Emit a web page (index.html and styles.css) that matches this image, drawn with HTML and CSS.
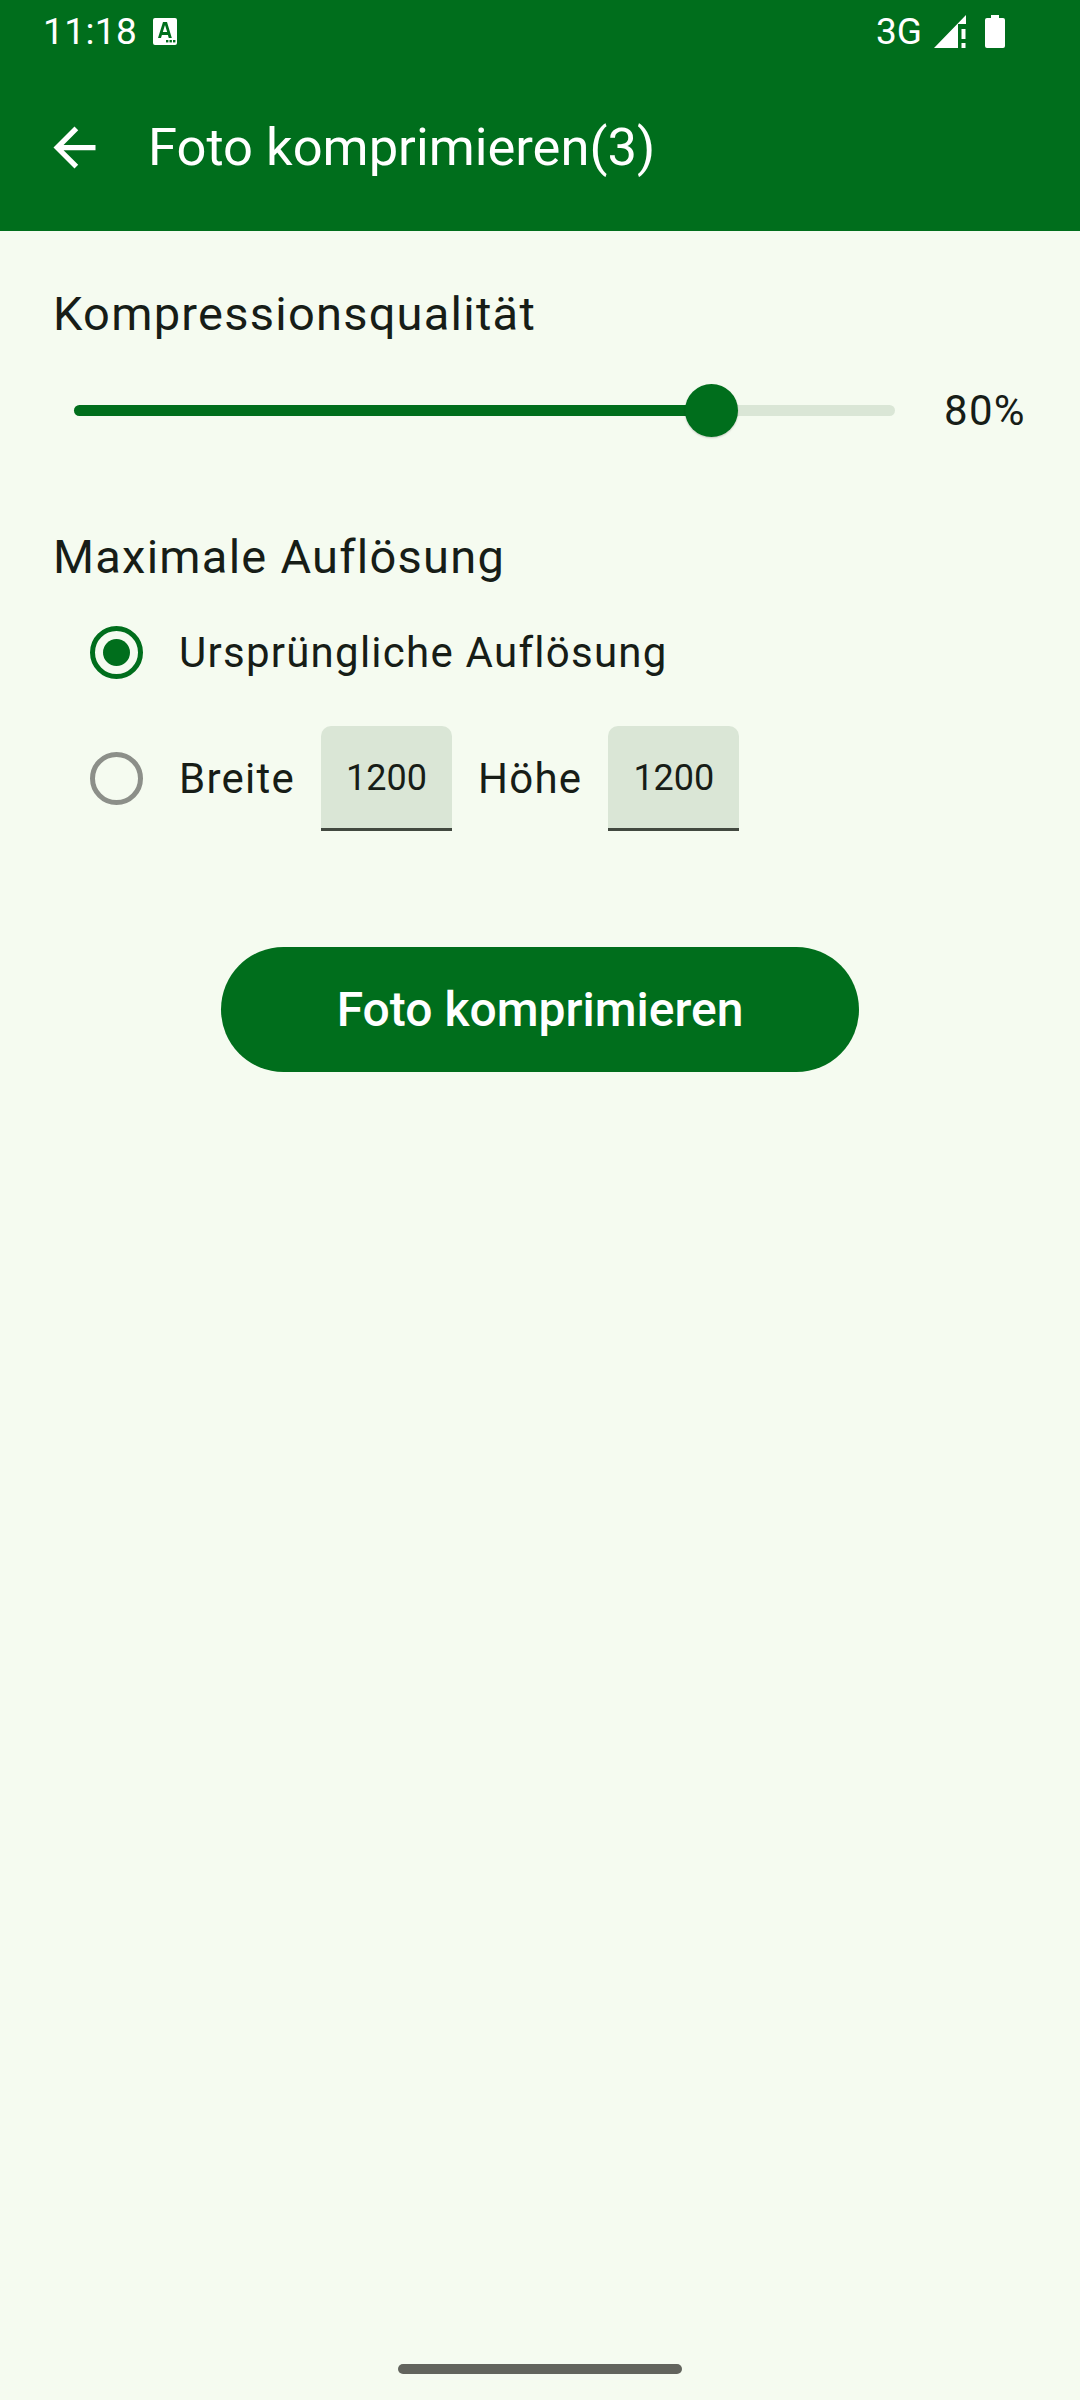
FILE: index.html
```html
<!DOCTYPE html>
<html>
  <head>
    <meta charset="utf-8">
    <link rel="stylesheet" href="styles.css">
    <title>Foto komprimieren</title>
  </head>
  <body>
    <div class="screen">
      <header class="app-header">
        <div class="status-bar">
          <div class="status-left">
            <span class="status-time">11:18</span>
            <svg class="icon-a" width="24" height="27" viewBox="0 0 24 27">
              <path fill="#fff" fill-rule="evenodd" d="M2 0h20a2 2 0 0 1 2 2v23a2 2 0 0 1-2 2H2a2 2 0 0 1-2-2V2a2 2 0 0 1 2-2zM10 4 5 20h3l.9-3h6l.9 3h3L14 4zM9.800 14 12 7l2.200 7z"/>
              <rect x="13" y="22" width="2.400" height="2.400" fill="#006e1c"/>
              <rect x="16.500" y="22" width="2.400" height="2.400" fill="#006e1c"/>
              <rect x="20" y="22" width="2.400" height="2.400" fill="#006e1c"/>
            </svg>
          </div>
          <div class="status-right">
            <span class="status-net">3G</span>
            <svg class="icon-signal" width="32" height="33" viewBox="0 0 32 33">
              <path fill="#fff" d="M0 33 32 0v9h-8v24z"/>
              <rect x="27.500" y="14" width="4" height="10" fill="#fff"/>
              <rect x="27.500" y="28" width="4" height="5" fill="#fff"/>
            </svg>
            <svg class="icon-battery" width="20" height="33" viewBox="0 0 20 33">
              <path fill="#fff" d="M6 0h8v3h4a2 2 0 0 1 2 2v26a2 2 0 0 1-2 2H2a2 2 0 0 1-2-2V5a2 2 0 0 1 2-2h4z"/>
            </svg>
          </div>
        </div>
        <div class="toolbar">
          <svg class="icon-back" width="63" height="63" viewBox="0 0 24 24">
            <path fill="#fff" d="M20 11H7.830l5.590-5.590L12 4l-8 8 8 8 1.410-1.410L7.830 13H20v-2z"/>
          </svg>
          <h1 class="toolbar-title">Foto komprimieren(3)</h1>
        </div>
      </header>

      <main class="content">
        <h2 class="section-label">Kompressionsqualität</h2>
        <div class="slider-row">
          <div class="slider">
            <div class="slider-fill"></div>
            <div class="slider-thumb"></div>
          </div>
          <span class="slider-value">80%</span>
        </div>

        <h2 class="section-label section-label-second">Maximale Auflösung</h2>
        <div class="radio-row radio-row-first">
          <span class="radio radio-on"></span>
          <span class="radio-text">Ursprüngliche Auflösung</span>
        </div>
        <div class="radio-row radio-row-second">
          <span class="radio"></span>
          <span class="radio-text">Breite</span>
          <div class="size-input">1200</div>
          <span class="radio-text">Höhe</span>
          <div class="size-input">1200</div>
        </div>

        <div class="button-row">
          <button class="main-btn">Foto komprimieren</button>
        </div>
      </main>

      <div class="home-bar"></div>
    </div>
  </body>
</html>
```

FILE: styles.css
```css
* {
  box-sizing: border-box;
}
html,
body {
  margin: 0;
  padding: 0;
}
body {
  width: 1080px;
  height: 2400px;
  overflow: hidden;
  background-color: #f5fbf0;
  font-family: Roboto, "Liberation Sans", sans-serif;
  color: #171d17;
}
.screen {
  height: 2400px;
  display: flex;
  flex-direction: column;
}

/* header */
.app-header {
  height: 231px;
  background-color: #006e1c;
  color: #fff;
}
.status-bar {
  height: 62px;
  padding: 0 75px 0 43px;
  display: flex;
  justify-content: space-between;
  align-items: center;
}
.status-left,
.status-right {
  display: flex;
  align-items: center;
}
.status-time {
  font-size: 37px;
  letter-spacing: 0.4px;
}
.icon-a {
  margin-left: 16px;
}
.status-net {
  font-size: 37px;
  margin-right: 12px;
}
.icon-battery {
  margin-left: 19px;
}
.toolbar {
  height: 170px;
  padding-left: 43px;
  display: flex;
  align-items: center;
}
.toolbar-title {
  margin: 0 0 0 42px;
  font-size: 52.5px;
  font-weight: 400;
}

/* form */
.content {
  flex: 1;
  padding: 0 53px;
}
.section-label {
  margin: 0;
  font-size: 47px;
  line-height: 62px;
  font-weight: 400;
  letter-spacing: 1.25px;
}
.content > .section-label:first-child {
  margin-top: 52px;
}
.section-label-second {
  margin-top: 90px;
}
.slider-row {
  margin-top: 39px;
  height: 52px;
  display: flex;
  align-items: center;
}
.slider {
  position: relative;
  width: 821px;
  height: 11px;
  margin-left: 21px;
  border-radius: 6px;
  background-color: #dae6d6;
}
.slider-fill {
  width: 80%;
  height: 100%;
  border-radius: 6px;
  background-color: #006e1c;
}
.slider-thumb {
  position: absolute;
  left: 611px;
  top: -21px;
  width: 53px;
  height: 53px;
  border-radius: 50%;
  background-color: #006e1c;
  box-shadow: 0 1px 2px rgba(0, 0, 0, 0.2);
}
.slider-value {
  margin-left: 49px;
  font-size: 42px;
  letter-spacing: 1.3px;
}
.radio-row {
  display: flex;
  align-items: center;
  padding-left: 37px;
}
.radio-row-first {
  margin-top: 38px;
  height: 53px;
}
.radio-row-second {
  margin-top: 47px;
  height: 105px;
}
.radio {
  width: 53px;
  height: 53px;
  margin-right: 36px;
  border: 5px solid #8c8f89;
  border-radius: 50%;
  display: flex;
  align-items: center;
  justify-content: center;
}
.radio-on {
  border-color: #006e1c;
}
.radio-on::after {
  content: "";
  width: 27px;
  height: 27px;
  border-radius: 50%;
  background-color: #006e1c;
}
.radio-text {
  font-size: 42px;
  letter-spacing: 1.25px;
}
.size-input {
  width: 131px;
  height: 105px;
  margin: 0 26px;
  border-bottom: 3px solid #424940;
  border-radius: 10px 10px 0 0;
  background-color: #dae6d6;
  font-size: 36px;
  line-height: 104px;
  text-align: center;
}
.button-row {
  margin-top: 116px;
  display: flex;
  justify-content: center;
}
.main-btn {
  width: 638px;
  height: 125px;
  border: 0;
  border-radius: 63px;
  background-color: #006e1c;
  color: #fff;
  font-family: Roboto, "Liberation Sans", sans-serif;
  font-size: 48px;
  font-weight: 500;
}

/* gesture bar */
.home-bar {
  align-self: center;
  width: 284px;
  height: 10px;
  margin-bottom: 26px;
  border-radius: 5px;
  background-color: #62645d;
}
```
